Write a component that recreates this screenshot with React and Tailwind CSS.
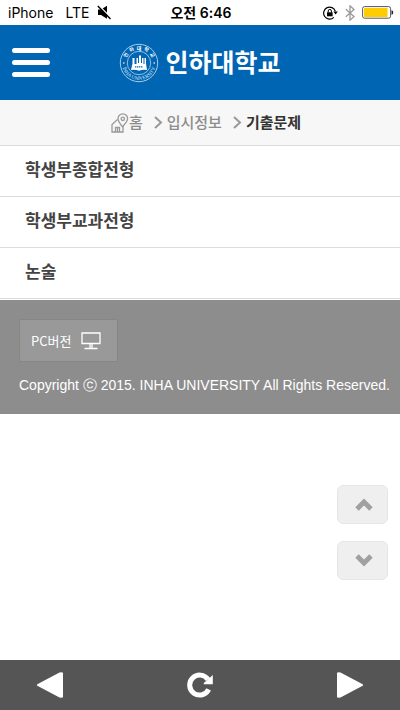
import { useState } from 'react';

const crumbs = ['홈', '입시정보', '기출문제'];

const menuItems = ['학생부종합전형', '학생부교과전형', '논술'];

function MuteIcon() {
  return (
    <svg width="15" height="15" viewBox="0 0 15 15" aria-hidden="true">
      <path d="M1 4.500h3L10 .8v13L4 10H1z" fill="#000" />
      <path d="M1.600 .2 14.800 13.600" stroke="#fff" strokeWidth="1.400" />
      <path d="M.8 1 13.500 14" stroke="#000" strokeWidth="1.400" />
    </svg>
  );
}

function RotationLockIcon() {
  return (
    <svg width="15" height="14" viewBox="0 0 15 14" fill="none" aria-hidden="true">
      <path d="M12.400 5.400A6 6 0 1 0 10.800 11.400" stroke="#000" strokeWidth="1.200" />
      <path d="M10.400 5.500h4.400l-2.200 3z" fill="#000" />
      <rect x="4" y="6.300" width="5.600" height="4" fill="#000" />
      <path d="M5.200 6.500V5a1.600 1.600 0 0 1 3.200 0v1.500" stroke="#000" strokeWidth="1" />
    </svg>
  );
}

function BluetoothIcon() {
  return (
    <svg width="10" height="16" viewBox="0 0 10 16" fill="none" aria-hidden="true">
      <path d="M.8 4.300 9 11.600 5 15.200V.8l4 3.600L.8 11.700" stroke="#999" strokeWidth="1.300" />
    </svg>
  );
}

function BatteryIcon() {
  return (
    <svg width="32" height="13" viewBox="0 0 32 13" fill="none" aria-hidden="true">
      <rect x=".6" y=".6" width="28" height="11.600" rx="2" stroke="#555" strokeWidth="1" />
      <rect x="2" y="2" width="23.500" height="9" rx=".5" fill="#fc0" />
      <path d="M29.500 4.300c1.200.2 1.700 1 1.700 2.200s-.5 2-1.700 2.200z" fill="#222" />
    </svg>
  );
}

function Seal() {
  return (
    <svg width="40" height="40" viewBox="0 0 40 40" fill="none" aria-hidden="true">
      <defs>
        <path id="seal-top" d="M6.500 20a13.500 13.500 0 0 1 27 0" />
        <path id="seal-bottom" d="M3 20a17 17 0 0 0 34 0" />
      </defs>
      <circle cx="20" cy="20" r="18.700" stroke="#b9d6ee" strokeWidth=".9" />
      <circle cx="20" cy="20" r="11.700" stroke="#b9d6ee" strokeWidth=".8" />
      <text fill="#fff" fontSize="5" fontWeight="700" textAnchor="middle">
        <textPath href="#seal-top" startOffset="50%">인 &#160;하 &#160;대 &#160;학 &#160;교</textPath>
      </text>
      <text fill="#dcebf7" fontSize="5" fontFamily="Liberation Serif, serif" textAnchor="middle">
        <textPath href="#seal-bottom" startOffset="50%">INHA UNIVERSITY</textPath>
      </text>
      <circle cx="4.800" cy="20" r=".8" fill="#fff" />
      <circle cx="35.200" cy="20" r=".8" fill="#fff" />
      <path
        d="M13.500 15h2v6h2v-6h1.500v5h1v-7.500h2V20h1v-5h1.500v6h1v-6h1.500v5.500l1 6.500q-4-1-8 .8-4-1.800-8-.8l1.500-6.500z"
        fill="#fff"
      />
      <path d="M16 23.800h8" stroke="#0065b3" strokeWidth="1.200" strokeDasharray="1.400 .6" />
    </svg>
  );
}

function HomePinIcon() {
  return (
    <svg width="18" height="20" viewBox="0 0 18 20" fill="none" stroke="#999" strokeWidth="1.300" aria-hidden="true">
      <path d="M6.500 6.500 1 11.500V19h11v-6" />
      <path d="M4.500 19v-4.500h4V19M6.500 14.500V19" />
      <path d="M11.500 13.800C8.500 10 7 8 7 5.700a4.700 4.700 0 0 1 9.600 0c0 2.300-2 4.500-5.100 8.100z" />
      <circle cx="11.800" cy="5.800" r="1.700" />
    </svg>
  );
}

function StatusBar() {
  return (
    <div className="grid h-[25px] grid-cols-3 items-center bg-white pl-2 pr-1.5 text-black">
      <div className="flex items-center gap-2 whitespace-nowrap font-['Inter','Noto_Sans_CJK_KR',sans-serif] text-sm">
        <span>iPhone</span>
        <span className="ml-1">LTE</span>
        <MuteIcon />
      </div>
      <div className="whitespace-nowrap text-center font-['Inter','Noto_Sans_CJK_KR',sans-serif] text-sm font-semibold">
        오전 6:46
      </div>
      <div className="flex items-center justify-end gap-[7px]">
        <RotationLockIcon />
        <BluetoothIcon />
        <BatteryIcon />
      </div>
    </div>
  );
}

function Header({ onMenu }) {
  return (
    <header className="grid h-[75px] grid-cols-[50px_1fr_50px] items-center bg-[#0065b3]">
      <button type="button" aria-label="메뉴" onClick={onMenu} className="ml-3 flex w-[38px] flex-col gap-[7px]">
        <span className="h-[5px] w-full rounded-full bg-white" />
        <span className="h-[5px] w-full rounded-full bg-white" />
        <span className="h-[5px] w-full rounded-full bg-white" />
      </button>
      <a href="#home" className="flex items-center justify-center gap-1.5 text-white">
        <Seal />
        <span className="pb-1 text-[25px] font-bold leading-8">인하대학교</span>
      </a>
    </header>
  );
}

function Breadcrumb() {
  return (
    <nav className="flex h-[46px] items-center justify-center border-b border-[#dcdcdc] bg-[#f7f7f7] pl-3 text-[15px] leading-5">
      <HomePinIcon />
      {crumbs.map((crumb, i) => (
        <span key={crumb} className="flex items-center pb-0.5">
          {i > 0 && (
            <svg width="9" height="13" viewBox="0 0 9 13" fill="none" className="ml-[11px] mr-1 mt-0.5" aria-hidden="true">
              <path d="m1 1 6 5.500L1 12" stroke="#999" strokeWidth="2" />
            </svg>
          )}
          <a
            href="#crumb"
            className={i === crumbs.length - 1 ? 'font-bold text-[#333]' : 'font-medium text-[#8c8c8c]'}
          >
            {crumb}
          </a>
        </span>
      ))}
    </nav>
  );
}

function Footer() {
  return (
    <footer className="h-[114px] bg-[#8d8d8d] px-[19px] pt-[19px] text-white">
      <button
        type="button"
        className="flex h-[43px] items-center gap-2.5 border border-[#868686] bg-[#999] pl-[11px] pr-4 text-[13px]"
      >
        PC버전
        <svg width="20" height="18" viewBox="0 0 20 18" fill="none" stroke="#fff" strokeWidth="1.300" aria-hidden="true">
          <path d="M1 1h18v10.500H1zM9 11.500V16M11 11.500V16M3.500 16.500h13" />
        </svg>
      </button>
      <p className="mt-[11px] whitespace-nowrap font-['Liberation_Sans',sans-serif] text-sm leading-6">
        Copyright ⓒ 2015. INHA UNIVERSITY All Rights Reserved.
      </p>
    </footer>
  );
}

function ScrollButton({ label, d, onClick }) {
  return (
    <button
      type="button"
      aria-label={label}
      onClick={onClick}
      className="flex h-[39px] w-[51px] items-center justify-center rounded-md border border-[#e6e6e6] bg-[#efefef] pl-0.5"
    >
      <svg width="18" height="13" viewBox="0 0 18 13" fill="none" aria-hidden="true">
        <path d={d} stroke="#a0a0a0" strokeWidth="4.800" />
      </svg>
    </button>
  );
}

function BottomBar() {
  return (
    <nav className="sticky bottom-0 mt-auto flex h-[50px] items-center justify-between bg-[#555] px-9">
      <button type="button" aria-label="뒤로" onClick={() => window.history.back()}>
        <svg width="28" height="26" viewBox="0 0 28 26" fill="#fff" aria-hidden="true">
          <path d="M1.300 12.200 23.500.4Q27 0 27 1v24q0 1-3.500.6L1.300 13.800q-1-.8 0-1.600z" />
        </svg>
      </button>
      <button type="button" aria-label="새로고침" onClick={() => window.location.reload()}>
        <svg width="26" height="26" viewBox="0 0 26 26" fill="none" aria-hidden="true">
          <path d="M21 7.500A10 10 0 1 0 21.700 17.400" stroke="#fff" strokeWidth="5" />
          <path d="M25.800 3v9.200h-9v-1.200l3-2.500z" fill="#fff" />
        </svg>
      </button>
      <button type="button" aria-label="앞으로" onClick={() => window.history.forward()}>
        <svg width="28" height="26" viewBox="0 0 28 26" fill="#fff" aria-hidden="true">
          <path d="M26.700 12.200 4.500.4Q1 0 1 1v24q0 1 3.500.6l22.200-11.800q1-.8 0-1.600z" />
        </svg>
      </button>
    </nav>
  );
}

export default function App() {
  const [open, setOpen] = useState(true);

  return (
    <div className="flex min-h-screen flex-col bg-white font-['Noto_Sans_CJK_KR',sans-serif]">
      <StatusBar />
      <Header onMenu={() => setOpen(!open)} />
      <Breadcrumb />
      {open && (
        <ul className="pb-px">
          {menuItems.map((item) => (
            <li key={item} className="border-b border-[#dcdcdc]">
              <a href="#exam" className="block px-[25px] pb-[15px] pt-[11px] text-[17px] font-bold leading-6 text-[#444]">
                {item}
              </a>
            </li>
          ))}
        </ul>
      )}
      <Footer />
      <div className="fixed bottom-[130px] right-3 flex flex-col gap-[17px]">
        <ScrollButton label="위로" d="m2 11 7-7 7 7" onClick={() => window.scrollTo(0, 0)} />
        <ScrollButton
          label="아래로"
          d="m2 2 7 7 7-7"
          onClick={() => window.scrollTo(0, document.body.scrollHeight)}
        />
      </div>
      <BottomBar />
    </div>
  );
}
